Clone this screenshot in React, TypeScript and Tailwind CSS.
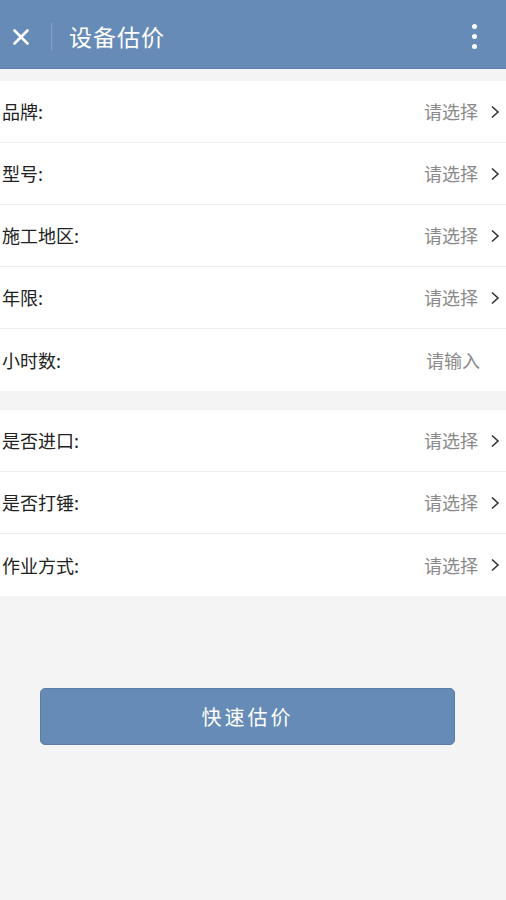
import { X } from "lucide-react";

const font = { fontFamily: '"Noto Sans CJK SC", "Noto Sans", sans-serif' };

function Row({ label, input, last }: { label: string; input?: boolean; last?: boolean }) {
  return (
    <div className={`flex h-[62px] items-center justify-between ${last ? "" : "border-b border-[#eeeeee]"}`}>
      <span className="pl-[2px] text-[18px] text-[#222]">{label}</span>
      {input ? (
        <span className="pr-[26px] text-[18px] text-[#8a8a8a]">请输入</span>
      ) : (
        <span className="flex items-center pr-[6px]">
          <span className="text-[18px] text-[#8a8a8a]">请选择</span>
          <svg width="10" height="14" viewBox="0 0 10 14" className="ml-[12px]" fill="none">
            <path d="M2 1.5 L8 7 L2 12.5" stroke="#333" strokeWidth="1.6" />
          </svg>
        </span>
      )}
    </div>
  );
}

export default function App() {
  return (
    <div className="flex min-h-[900px] w-[506px] flex-col bg-[#f4f4f4]" style={font}>
      <header className="flex h-[69px] items-center border-b border-[#5d81ad] bg-[#668bb7] pt-[5px] text-white">
        <div className="flex w-[40px] justify-center pl-[2px]">
          <X size={26} strokeWidth={2.4} />
        </div>
        <div className="ml-[11px] h-[27px] w-px bg-[#86a3c6]" />
        <h1 className="ml-[17px] text-[23px] tracking-[1px]">设备估价</h1>
        <div className="ml-auto mr-[29px] flex flex-col gap-[5px]">
          <span className="h-[5px] w-[5px] rounded-full bg-white" />
          <span className="h-[5px] w-[5px] rounded-full bg-white" />
          <span className="h-[5px] w-[5px] rounded-full bg-white" />
        </div>
      </header>

      <section className="mt-[12px] bg-white">
        <Row label="品牌:" />
        <Row label="型号:" />
        <Row label="施工地区:" />
        <Row label="年限:" />
        <Row label="小时数:" input last />
      </section>

      <section className="mt-[19px] bg-white">
        <Row label="是否进口:" />
        <Row label="是否打锤:" />
        <Row label="作业方式:" last />
      </section>

      <div className="mt-[92px] px-[40px] pr-[51px]">
        <button className="h-[57px] w-full rounded-[5px] border border-[#5a7eaa] bg-[#668bb7] text-[20px] tracking-[3px] text-white">
          快速估价
        </button>
      </div>
    </div>
  );
}
